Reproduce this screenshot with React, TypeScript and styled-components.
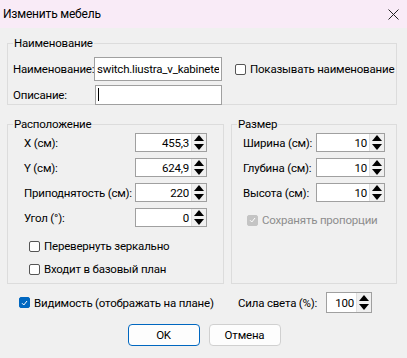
import React from 'react'
import styled, { createGlobalStyle } from 'styled-components'

const GlobalStyle = createGlobalStyle`
  html, body {
    margin: 0;
    padding: 0;
    background: #f0f0f0;
  }
  body {
    font-family: Roboto, 'Liberation Sans', Arial, sans-serif;
    font-size: 11.5px;
    letter-spacing: -0.2px;
    color: #000;
  }
`

//#region s
const Window = styled.div`
  width: 407px;
  height: 358px;
  display: flex;
  flex-direction: column;
  background: #f0f0f0;
  overflow: hidden;
  white-space: nowrap;
`

const TitleBar = styled.div`
  height: 28px;
  flex: none;
  display: flex;
  align-items: center;
  justify-content: space-between;
  padding: 0 8px 0 3px;
  background: #f9ebf7;
  font-size: 12px;
`

const Content = styled.div`
  display: flex;
  flex-direction: column;
  padding: 8px 10px 0 7px;
`

const Group = styled.fieldset<{ $height: number; $width?: number }>`
  margin: 0;
  padding: 0;
  border: 1px solid #dcdcdc;
  height: ${(p) => p.$height}px;
  width: ${(p) => (p.$width ? `${p.$width}px` : 'auto')};
  box-sizing: border-box;
  min-width: 0;
  flex: ${(p) => (p.$width ? 'none' : '1')};
`

const Legend = styled.legend`
  margin-left: 5px;
  padding: 0 1px;
  line-height: 15px;
`

const NameGrid = styled.div`
  display: grid;
  grid-template-columns: 81px 128px auto;
  grid-template-rows: 24px 19px;
  row-gap: 4px;
  align-items: center;
  padding: 6px 0 0 5px;
`

const TextInput = styled.input<{ $height: number }>`
  box-sizing: border-box;
  height: ${(p) => p.$height}px;
  width: 128px;
  border: 1px solid #a0a0a0;
  background: #fff;
  font: inherit;
  letter-spacing: inherit;
  padding: 0 2px;
  outline: none;
`

const Caret = styled.span`
  display: inline-block;
  width: 1px;
  height: 13px;
  background: #000;
  margin-left: 1px;
`

const FakeInput = styled.div<{ $height: number; $shift?: number }>`
  box-sizing: border-box;
  height: ${(p) => p.$height}px;
  width: ${(p) => 128 - (p.$shift || 0)}px;
  margin-left: ${(p) => p.$shift || 0}px;
  border: 1px solid #a0a0a0;
  background: #fff;
  display: flex;
  align-items: center;
  padding-left: 1px;
`

const CheckRow = styled.label<{ $indent?: number; $disabled?: boolean }>`
  display: flex;
  align-items: center;
  gap: 4px;
  margin-left: ${(p) => p.$indent || 0}px;
  color: ${(p) => (p.$disabled ? '#8d8d8d' : '#000')};
  white-space: nowrap;
`

const Box = styled.span<{ $variant: 'empty' | 'checked' | 'disabled' }>`
  width: 11px;
  height: 11px;
  flex: none;
  box-sizing: border-box;
  border-radius: 2px;
  display: flex;
  align-items: center;
  justify-content: center;
  border: 1px solid
    ${(p) => (p.$variant === 'empty' ? '#555' : p.$variant === 'checked' ? '#0067c0' : '#c4c4c4')};
  background: ${(p) => (p.$variant === 'empty' ? '#fff' : p.$variant === 'checked' ? '#0067c0' : '#c4c4c4')};
`

const GroupsRow = styled.div`
  display: flex;
  gap: 7px;
  margin-top: 12px;
`

const FieldRows = styled.div<{ $pad: number; $label: number }>`
  display: grid;
  grid-template-columns: ${(p) => p.$label}px auto;
  grid-auto-rows: 19px;
  row-gap: 6px;
  align-items: center;
  justify-content: start;
  padding: 1px 0 0 ${(p) => p.$pad}px;
`

const SpinBox = styled.div<{ $width: number; $height?: number }>`
  box-sizing: border-box;
  width: ${(p) => p.$width}px;
  height: ${(p) => p.$height || 19}px;
  border: 1px solid #a0a0a0;
  background: #fff;
  display: flex;
  align-items: stretch;
`

const SpinValue = styled.div`
  flex: 1;
  display: flex;
  align-items: center;
  justify-content: flex-end;
  padding-right: 2px;
`

const SpinButtons = styled.div`
  width: 14px;
  display: flex;
  flex-direction: column;
  background: #f0f0f0;
  border-left: 1px solid #e0e0e0;
`

const SpinHalf = styled.div`
  flex: 1;
  display: flex;
  align-items: center;
  justify-content: center;
`

const CheckList = styled.div<{ $top: number; $indent: number; $gap: number }>`
  display: flex;
  flex-direction: column;
  gap: ${(p) => p.$gap}px;
  padding: ${(p) => p.$top}px 0 0 ${(p) => p.$indent}px;
`

const BottomRow = styled.div`
  display: grid;
  grid-template-columns: 219px 88px auto;
  justify-content: start;
  align-items: center;
  height: 21px;
  margin-top: 8px;
  padding-left: 12px;
`

const Buttons = styled.div`
  display: flex;
  justify-content: center;
  gap: 9px;
  margin-top: 11px;
  padding-left: 4px;
`

const Button = styled.button<{ $primary?: boolean }>`
  box-sizing: border-box;
  width: 72px;
  height: 22px;
  border-radius: 4px;
  font: inherit;
  letter-spacing: inherit;
  background: #fdfdfd;
  border: 1px solid ${(p) => (p.$primary ? '#0067c0' : '#d0d0d0')};
  padding: 0;
`
//#endregion

const Spinner = ({ value, width, height }: { value: string; width: number; height?: number }) => (
  <SpinBox $width={width} $height={height}>
    <SpinValue>{value}</SpinValue>
    <SpinButtons>
      <SpinHalf>
        <svg width='10' height='6' viewBox='0 0 10 6'>
          <path d='M0 6 L5 0 L10 6 Z' fill='#000' />
        </svg>
      </SpinHalf>
      <SpinHalf>
        <svg width='10' height='6' viewBox='0 0 10 6'>
          <path d='M0 0 L5 6 L10 0 Z' fill='#000' />
        </svg>
      </SpinHalf>
    </SpinButtons>
  </SpinBox>
)

const Check = ({ variant }: { variant: 'empty' | 'checked' | 'disabled' }) => (
  <Box $variant={variant}>
    {variant !== 'empty' && (
      <svg width='7' height='6' viewBox='0 0 7 6'>
        <path d='M1 3.2 L2.8 5 L6 1' stroke='#fff' strokeWidth='1' fill='none' />
      </svg>
    )}
  </Box>
)

const App = () => {
  return (
    <>
      <GlobalStyle />
      <Window>
        <TitleBar>
          <span>Изменить мебель</span>
          <svg width='11' height='11' viewBox='0 0 11 11'>
            <path d='M0.5 0.5 L10.5 10.5 M10.5 0.5 L0.5 10.5' stroke='#222' strokeWidth='1' />
          </svg>
        </TitleBar>
        <Content>
          <Group $height={80}>
            <Legend>Наименование</Legend>
            <NameGrid>
              <span>Наименование:</span>
              <TextInput $height={24} defaultValue='switch.liustra_v_kabinete' readOnly />
              <CheckRow $indent={13}>
                <Check variant='empty' />
                Показывать наименование
              </CheckRow>
              <span>Описание:</span>
              <FakeInput $height={20} $shift={1}>
                <Caret />
              </FakeInput>
            </NameGrid>
          </Group>
          <GroupsRow>
            <Group $height={167} $width={217}>
              <Legend>Расположение</Legend>
              <FieldRows $pad={16} $label={111}>
                <span>X (см):</span>
                <Spinner value='455,3' width={72} />
                <span>Y (см):</span>
                <Spinner value='624,9' width={72} />
                <span>Приподнятость (см):</span>
                <Spinner value='220' width={72} />
                <span>Угол (°):</span>
                <Spinner value='0' width={72} />
              </FieldRows>
              <CheckList $top={12} $indent={21} $gap={9}>
                <CheckRow>
                  <Check variant='empty' />
                  Перевернуть зеркально
                </CheckRow>
                <CheckRow>
                  <Check variant='empty' />
                  Входит в базовый план
                </CheckRow>
              </CheckList>
            </Group>
            <Group $height={167}>
              <Legend>Размер</Legend>
              <FieldRows $pad={11} $label={73}>
                <span>Ширина (см):</span>
                <Spinner value='10' width={69} />
                <span>Глубина (см):</span>
                <Spinner value='10' width={69} />
                <span>Высота (см):</span>
                <Spinner value='10' width={69} />
              </FieldRows>
              <CheckList $top={11} $indent={15} $gap={0}>
                <CheckRow $disabled>
                  <Check variant='disabled' />
                  Сохранять пропорции
                </CheckRow>
              </CheckList>
            </Group>
          </GroupsRow>
          <BottomRow>
            <CheckRow>
              <Check variant='checked' />
              Видимость (отображать на плане)
            </CheckRow>
            <span>Сила света (%):</span>
            <Spinner value='100' width={46} height={21} />
          </BottomRow>
          <Buttons>
            <Button $primary>OK</Button>
            <Button>Отмена</Button>
          </Buttons>
        </Content>
      </Window>
    </>
  )
}

export default App
